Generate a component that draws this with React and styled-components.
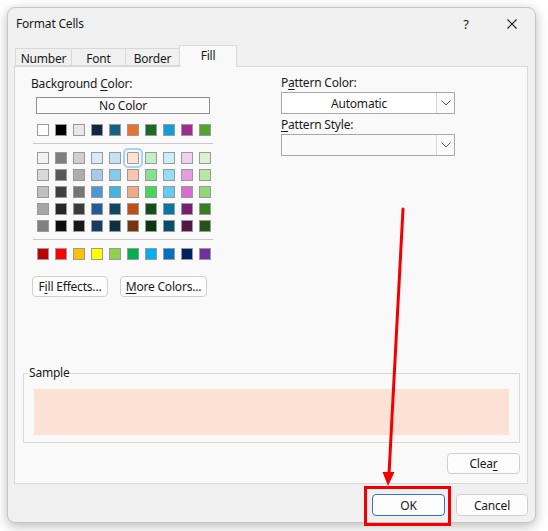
import React from "react";
import styled, { createGlobalStyle } from "styled-components";

const Global = createGlobalStyle`
  html, body { margin: 0; padding: 0; background: #ffffff; }
  body { font-family: "Segoe UI", "Noto Sans", "Open Sans", sans-serif; font-size: 12px; letter-spacing: -0.2px; color: #1a1a1a; }
  * { box-sizing: border-box; }
`;

const Page = styled.div`
  position: relative;
  width: 548px;
  height: 531px;
  padding: 7px 0 0 7px;
`;

const Window = styled.div`
  width: 529px;
  height: 516px;
  background: #f0f0f0;
  border: 1px solid #c6c6c6;
  border-radius: 8px;
  box-shadow: 0 3px 12px rgba(0, 0, 0, 0.28);
  display: flex;
  flex-direction: column;
`;

const TitleBar = styled.div`
  height: 31px;
  display: flex;
  align-items: center;
`;

const Title = styled.div`
  flex: 1;
  padding-left: 8px;
  font-size: 12px;
  color: #1a1a1a;
`;

const TitleButton = styled.div`
  width: 46px;
  height: 31px;
  display: flex;
  align-items: center;
  justify-content: center;
  font-size: 13px;
  color: #1a1a1a;
`;

const TabRow = styled.div`
  margin-top: 6px;
  height: 21px;
  padding-left: 7px;
  display: flex;
  align-items: flex-end;
  position: relative;
  z-index: 1;
`;

const Tab = styled.div`
  width: ${(p) => p.$w}px;
  height: ${(p) => (p.$active ? 22 : 18)}px;
  margin-bottom: ${(p) => (p.$active ? -1 : 0)}px;
  display: flex;
  align-items: center;
  justify-content: center;
  padding-bottom: ${(p) => (p.$active ? 2 : 0)}px;
  padding-top: ${(p) => (p.$active ? 0 : 2)}px;
  background: ${(p) => (p.$active ? "#f9f9f9" : "#f0f0f0")};
  border: 1px solid #d9d9d9;
  border-bottom: ${(p) => (p.$active ? "none" : "1px solid #d9d9d9")};
  margin-left: ${(p) => (p.$first ? 0 : -1)}px;
  font-size: 12px;
  color: #1a1a1a;
`;

const Panel = styled.div`
  margin: 0 7px 0 6px;
  height: 418px;
  background: #f9f9f9;
  border: 1px solid #d9d9d9;
  display: flex;
  flex-direction: column;
`;

const TopSection = styled.div`
  display: flex;
  padding: 10px 0 0 16px;
`;

const LeftCol = styled.div`
  width: 250px;
  display: flex;
  flex-direction: column;
  align-items: flex-start;
`;

const RightCol = styled.div`
  width: 174px;
  display: flex;
  flex-direction: column;
  margin-top: -1px;
`;

const Label = styled.div`
  height: 14px;
  line-height: 14px;
  font-size: 12px;
  color: #1a1a1a;
  margin-top: ${(p) => p.$mt || 0}px;
  white-space: nowrap;
`;

const U = styled.span`
  text-decoration: underline;
  text-underline-offset: 2px;
`;

const NoColorButton = styled.div`
  margin: 6px 0 0 5px;
  width: 174px;
  height: 17px;
  border: 1px solid #8f8f8f;
  background: #fbfbfb;
  display: flex;
  align-items: center;
  justify-content: center;
  font-size: 12px;
`;

const SwatchRow = styled.div`
  display: flex;
  gap: 6px;
  padding-left: 6px;
  margin-top: ${(p) => p.$mt || 0}px;
`;

const SwatchGrid = styled.div`
  display: flex;
  flex-direction: column;
  gap: 5px;
  margin-top: 8px;
`;

const Swatch = styled.div`
  width: 12px;
  height: 12px;
  background: ${(p) => p.$c};
  border: 1px solid #9a9a9a;
  ${(p) =>
    p.$selected
      ? `outline: 2px solid #a9d0f5; outline-offset: 2px; border-radius: 1px;`
      : ""}
`;

const Separator = styled.div`
  width: 180px;
  height: 1px;
  margin: 7px 0 0 2px;
  background: #c8c8c8;
`;

const ButtonRow = styled.div`
  display: flex;
  gap: 12px;
  margin: 16px 0 0 1px;
`;

const Button = styled.div`
  width: ${(p) => p.$w}px;
  height: ${(p) => p.$h || 21}px;
  display: flex;
  align-items: center;
  justify-content: center;
  background: #fdfdfd;
  border: 1px solid ${(p) => (p.$primary ? "#2f74cc" : "#d0d0d0")};
  border-radius: 4px;
  font-size: 12px;
  color: #1a1a1a;
`;

const Select = styled.div`
  margin-top: 2px;
  height: 22px;
  display: flex;
  border: 1px solid #a8a8a8;
  background: ${(p) => (p.$disabled ? "#fafafa" : "#ffffff")};
`;

const SelectValue = styled.div`
  flex: 1;
  display: flex;
  align-items: center;
  justify-content: center;
  font-size: 12px;
`;

const SelectArrow = styled.div`
  width: 18px;
  display: flex;
  align-items: center;
  justify-content: center;
  border-left: 1px solid #d6d6d6;
  background: #fbfbfb;
`;

const Spacer = styled.div`
  flex: 1;
`;

const SampleGroup = styled.div`
  position: relative;
  margin: 0 7px 0 8px;
  height: 70px;
  border: 1px solid #dadada;
  padding: 15px 10px 7px 10px;
`;

const Legend = styled.div`
  position: absolute;
  top: -8px;
  left: 4px;
  padding: 0 1px;
  background: #f9f9f9;
  font-size: 12px;
  line-height: 14px;
  color: #1a1a1a;
`;

const SampleFill = styled.div`
  height: 46px;
  background: #fbe2d5;
`;

const ClearRow = styled.div`
  display: flex;
  justify-content: flex-end;
  margin: 10px 7px 9px 0;
`;

const Footer = styled.div`
  flex: 1;
  display: flex;
  justify-content: flex-end;
  gap: 11px;
  padding: 10px 7px 0 0;
`;

const Highlight = styled.div`
  position: relative;
  &::after {
    content: "";
    position: absolute;
    top: -8px;
    left: -8px;
    right: -6px;
    bottom: -4px;
    border: 3px solid #f20000;
    pointer-events: none;
  }
`;

const ArrowLayer = styled.svg`
  position: absolute;
  left: 0;
  top: 0;
  pointer-events: none;
`;

const themeRow = ["#FFFFFF", "#000000", "#E8E8E8", "#0E2841", "#156082", "#E97132", "#196B24", "#0F9ED5", "#A02B93", "#4EA72E"];

const gridCols = [
  ["#F2F2F2", "#D9D9D9", "#BFBFBF", "#A6A6A6", "#808080"],
  ["#7F7F7F", "#595959", "#404040", "#262626", "#0D0D0D"],
  ["#D0D0D0", "#ADADAD", "#757575", "#3A3A3A", "#171717"],
  ["#DAE9F8", "#A6C9EC", "#4E95D9", "#215C98", "#153D64"],
  ["#C0E4F5", "#83CCEB", "#44B3E1", "#0F4761", "#0B3041"],
  ["#FBE2D5", "#F7C7AC", "#F1A983", "#C04F15", "#77340F"],
  ["#C1F0C8", "#83E28E", "#47D45A", "#124F1A", "#0C3511"],
  ["#CAEEFB", "#95DCF7", "#61CBF3", "#0B76A0", "#074F69"],
  ["#F2CEEF", "#E59EDD", "#D86DCD", "#77206D", "#501549"],
  ["#DAF2D0", "#B5E6A2", "#8ED973", "#3B7D23", "#275317"],
];

const standardRow = ["#C00000", "#FF0000", "#FFC000", "#FFFF00", "#92D050", "#00B050", "#00B0F0", "#0070C0", "#002060", "#7030A0"];

const Chevron = () => (
  <svg width="10" height="6" viewBox="0 0 10 6">
    <polyline points="0.5,0.5 5,5 9.5,0.5" fill="none" stroke="#555" strokeWidth="1" />
  </svg>
);

export default function App() {
  return (
    <>
      <Global />
      <Page>
        <Window>
          <TitleBar>
            <Title>Format Cells</Title>
            <TitleButton>?</TitleButton>
            <TitleButton>
              <svg width="10" height="10" viewBox="0 0 10 10">
                <path d="M0.5 0.5 L9.5 9.5 M9.5 0.5 L0.5 9.5" stroke="#1a1a1a" strokeWidth="1.1" />
              </svg>
            </TitleButton>
          </TitleBar>
          <TabRow>
            <Tab $w={57} $first>Number</Tab>
            <Tab $w={55}>Font</Tab>
            <Tab $w={55}>Border</Tab>
            <Tab $w={58} $active>Fill</Tab>
          </TabRow>
          <Panel>
            <TopSection>
              <LeftCol>
                <Label>
                  Background <U>C</U>olor:
                </Label>
                <NoColorButton>No Color</NoColorButton>
                <SwatchRow $mt={10}>
                  {themeRow.map((c) => (
                    <Swatch key={c} $c={c} />
                  ))}
                </SwatchRow>
                <Separator />
                <SwatchGrid>
                  {[0, 1, 2, 3, 4].map((r) => (
                    <SwatchRow key={r}>
                      {gridCols.map((col, ci) => (
                        <Swatch key={ci} $c={col[r]} $selected={r === 0 && ci === 5} />
                      ))}
                    </SwatchRow>
                  ))}
                </SwatchGrid>
                <Separator />
                <SwatchRow $mt={8}>
                  {standardRow.map((c) => (
                    <Swatch key={c} $c={c} />
                  ))}
                </SwatchRow>
                <ButtonRow>
                  <Button $w={76}>
                    F<U>i</U>ll Effects...
                  </Button>
                  <Button $w={87}>
                    <U>M</U>ore Colors...
                  </Button>
                </ButtonRow>
              </LeftCol>
              <RightCol>
                <Label>
                  P<U>a</U>ttern Color:
                </Label>
                <Select>
                  <SelectValue>Automatic</SelectValue>
                  <SelectArrow>
                    <Chevron />
                  </SelectArrow>
                </Select>
                <Label $mt={4}>
                  <U>P</U>attern Style:
                </Label>
                <Select $disabled>
                  <SelectValue />
                  <SelectArrow>
                    <Chevron />
                  </SelectArrow>
                </Select>
              </RightCol>
            </TopSection>
            <Spacer />
            <SampleGroup>
              <Legend>Sample</Legend>
              <SampleFill />
            </SampleGroup>
            <ClearRow>
              <Button $w={73}>
                Clea<U>r</U>
              </Button>
            </ClearRow>
          </Panel>
          <Footer>
            <Highlight>
              <Button $w={73} $h={22} $primary>
                OK
              </Button>
            </Highlight>
            <Button $w={72} $h={22}>
              Cancel
            </Button>
          </Footer>
        </Window>
        <ArrowLayer width="548" height="531" viewBox="0 0 548 531">
          <line x1="403" y1="209" x2="389" y2="474" stroke="#f20000" strokeWidth="3" strokeLinecap="round" />
          <polygon points="382.5,472 394.5,472 388,486" fill="#f20000" />
        </ArrowLayer>
      </Page>
    </>
  );
}
